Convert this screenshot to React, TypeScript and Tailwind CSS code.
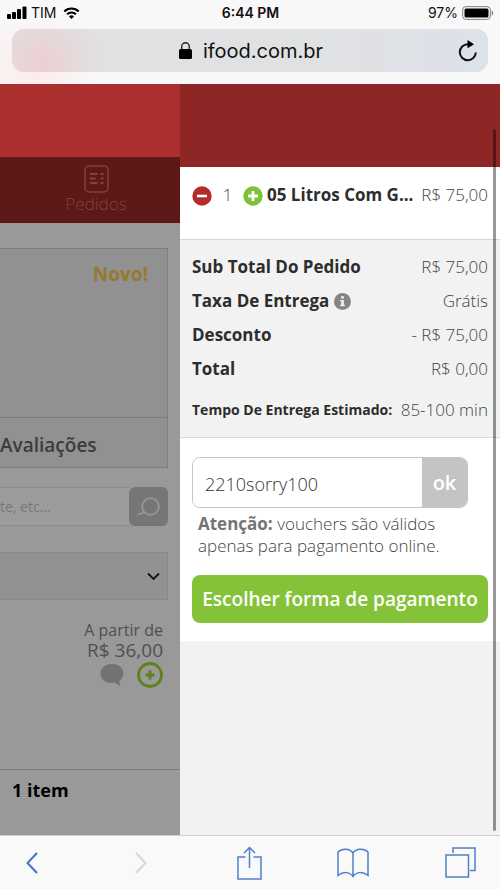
import { useState } from "react";

interface SummaryRowProps {
  label: string;
  value: string;
  info?: boolean;
}

const summary: SummaryRowProps[] = [
  { label: "Sub Total Do Pedido", value: "R$ 75,00" },
  { label: "Taxa De Entrega", value: "Grátis", info: true },
  { label: "Desconto", value: "- R$ 75,00" },
  { label: "Total", value: "R$ 0,00" },
];

function StatusBar() {
  return (
    <div className="grid h-[25px] grid-cols-3 items-center pl-[7px] pr-[6px] font-['Inter',sans-serif] text-sm text-[#111]">
      <div className="flex items-center gap-1">
        <svg width="20" height="13" viewBox="0 0 20 13" fill="#000" aria-hidden="true">
          <rect x="0" y="8" width="4" height="5" rx="1" />
          <rect x="5" y="6" width="4" height="7" rx="1" />
          <rect x="10" y="3" width="4" height="10" rx="1" />
          <rect x="15.500" y="0.500" width="4" height="12.500" rx="1" />
        </svg>
        <span>TIM</span>
        <svg className="ml-[3px]" width="17" height="12" viewBox="0 0 18 13" fill="none" stroke="#000" strokeWidth="2.300" aria-hidden="true">
          <path d="M1.200 4.800a11 11 0 0 1 15.600 0" />
          <path d="M4.200 7.900a6.800 6.800 0 0 1 9.600 0" />
          <path d="M9 13 6.300 10.200a3.800 3.800 0 0 1 5.400 0z" fill="#000" stroke="none" />
        </svg>
      </div>
      <span className="text-center font-semibold">6:44 PM</span>
      <div className="flex items-center justify-end gap-1">
        <span>97%</span>
        <svg width="32" height="14" viewBox="0 0 32 14" aria-hidden="true">
          <rect x="0.700" y="0.700" width="27.600" height="12.600" rx="3" fill="#fff" stroke="#777" />
          <rect x="2.500" y="2.500" width="24" height="9" rx="1.500" fill="#000" />
          <path d="M29.700 4.500c2 .6 2 4.400 0 5z" fill="#888" />
        </svg>
      </div>
    </div>
  );
}

function AddressBar() {
  return (
    <div className="bg-[radial-gradient(circle_at_35px_40px,#fceaea_0,transparent_60px)] px-3 pb-3 pt-1">
      <div className="flex h-[43px] items-center rounded-xl bg-[#e1e2e4] bg-[radial-gradient(circle_at_30px_35px,#eccfd2_0,transparent_60px),linear-gradient(90deg,#e0e1e2_60%,#dde1e9)] pl-8 pr-[10px]">
        <div className="flex flex-1 items-center justify-center gap-[11px]">
          <svg width="13" height="17" viewBox="0 0 13 17" aria-hidden="true">
            <rect x="0" y="7" width="13" height="10" rx="1.500" fill="#000" />
            <path d="M2.700 8V4.600a3.800 3.800 0 0 1 7.600 0V8" fill="none" stroke="#222" strokeWidth="1.400" />
          </svg>
          <span className="font-['Inter',sans-serif] text-xl text-[#111]">ifood.com.br</span>
        </div>
        <button type="button" aria-label="Recarregar">
          <svg width="20" height="22" viewBox="0 0 20 22" fill="none" aria-hidden="true">
            <path d="M11 4.200H9.800a8 8 0 1 0 8 8.300" stroke="#111" strokeWidth="2" />
            <path d="M9.500 0v8.200L16 4.300z" fill="#000" />
          </svg>
        </button>
      </div>
    </div>
  );
}

/* Restaurant page, dimmed while the cart is open */
function RestaurantPage() {
  return (
    <main className="flex w-9/25 min-w-[180px] flex-col overflow-hidden bg-[#999]">
      <header className="h-[73px] bg-[#ab2f2e]" />
      <nav className="flex h-[66px] flex-col bg-[#5d1818] pl-3 pt-2">
        <a href="#pedidos" className="flex flex-col items-center text-[#8a3e3e]">
          <svg width="25" height="28" viewBox="0 0 25 28" fill="none" stroke="currentColor" aria-hidden="true">
            <rect x="1" y="1" width="23" height="26" rx="4" strokeWidth="1.500" />
            <path d="M6 9h7.500M6 13.500h5.500M6 18h7.500" strokeWidth="2" />
            <path d="M16.500 9h3M16.500 13.500h3M16.500 18h3" strokeWidth="2.200" />
          </svg>
          <span className="text-[17px] font-light leading-[22px]">Pedidos</span>
        </a>
      </nav>

      <div className="flex flex-col pr-3 pt-[25px]">
        <section className="border border-l-0 border-[#7e7e7e] bg-[#919191]">
          <div className="h-[168px] pr-[19px] pt-[13px] text-right text-[19px] font-bold leading-6 text-[#957a2c]">Novo!</div>
          <h2 className="h-[50px] border-t border-[#7e7e7e] text-[19px] font-semibold leading-[54px] text-[#3c3c3c]">Avaliações</h2>
        </section>

        <form className="mt-[19px] flex h-[39px]" onSubmit={(e) => e.preventDefault()}>
          <input
            type="search"
            aria-label="Buscar no cardápio"
            placeholder="te, etc..."
            className="min-w-0 flex-1 border-y border-[#8a8a8a] bg-[#9c9c9c] text-sm outline-none placeholder:text-[#777]"
          />
          <button type="submit" aria-label="Buscar" className="flex w-[39px] items-center justify-center rounded-md bg-[#767676]">
            <svg width="23" height="20" viewBox="0 0 23 20" fill="none" stroke="#979797" strokeWidth="1.800" aria-hidden="true">
              <circle cx="13.500" cy="9.500" r="8.300" />
              <path d="M7 14.500 5.500 16 1 17.500" />
            </svg>
          </button>
        </form>

        <div className="relative mt-[26px]">
          <select aria-label="Categoria" className="h-12 w-full appearance-none border border-l-0 border-[#898989] bg-[#919191]">
            <option value=""></option>
          </select>
          <svg className="pointer-events-none absolute right-2 top-5" width="13" height="9" viewBox="0 0 13 9" fill="none" stroke="#111" strokeWidth="1.800" aria-hidden="true">
            <path d="M1 1.500 6.500 7 12 1.500" />
          </svg>
        </div>

        <div className="mt-5 flex flex-col items-end pr-[5px] font-medium text-[#505050]">
          <span className="text-base leading-5">A partir de</span>
          <span className="text-[19px] leading-5">R$ 36,00</span>
          <div className="mt-[2px] flex items-center gap-[13px]">
            <button type="button" aria-label="Comentários">
              <svg width="24" height="22" viewBox="0 0 24 22" fill="#727272" aria-hidden="true">
                <path d="M12 0C5.400 0 .5 4 .5 9.500S5.400 19 12 19c1 0 2.200-.1 3.200-.4 1.300 1.600 3.300 2.900 5.300 3.200-.8-1.500-1.100-3.300-.9-5.100 2.400-1.700 3.900-4.300 3.900-7.200C23.500 4 18.600 0 12 0z" />
              </svg>
            </button>
            <button type="button" aria-label="Adicionar item">
              <svg width="26" height="26" viewBox="0 0 26 26" fill="none" stroke="#5f801f" aria-hidden="true">
                <circle cx="13" cy="13" r="11.500" strokeWidth="2.800" />
                <path d="M13 8.500v9M8.500 13h9" strokeWidth="3" />
              </svg>
            </button>
          </div>
        </div>
      </div>

      <footer className="mt-auto h-[66px] border-t border-[#7c7c7c] pl-3 pt-2 text-lg font-bold leading-6 text-black">1 item</footer>
    </main>
  );
}

function SummaryRow({ label, value, info }: SummaryRowProps) {
  return (
    <div className="flex h-[34px] items-center justify-between">
      <dt className="flex items-center gap-[5px] font-bold text-[#2d2d2d]">
        {label}
        {info && (
          <svg width="17" height="17" viewBox="0 0 17 17" aria-hidden="true">
            <circle cx="8.500" cy="8.500" r="8.500" fill="#858585" />
            <path d="M7 3.200h3v2.300H7zM6.200 7h3.700v4.800h1v1.400H6.100v-1.400h1.100V8.400h-1z" fill="#eee" />
          </svg>
        )}
      </dt>
      <dd className="font-light text-[#444]">{value}</dd>
    </div>
  );
}

function CartPanel() {
  const [quantity, setQuantity] = useState(1);
  const [voucher, setVoucher] = useState("2210sorry100");

  return (
    <aside className="relative flex min-w-0 flex-1 flex-col bg-[#f2f2f2] text-[17px]">
      <header className="h-[83px] bg-[#8d2625]" />

      <div className="flex h-[73px] items-start border-b border-[#d8d8d8] bg-white px-3 pt-4 leading-6">
        <button type="button" aria-label="Remover um" className="mt-[3px]" onClick={() => setQuantity(Math.max(0, quantity - 1))}>
          <svg width="20" height="20" viewBox="0 0 20 20" aria-hidden="true">
            <circle cx="10" cy="10" r="9.700" fill="#b32b2c" />
            <path d="M5 10h10" stroke="#fff" strokeWidth="2.600" />
          </svg>
        </button>
        <span className="flex-none basis-[31px] text-center font-light text-[#444]">{quantity}</span>
        <button type="button" aria-label="Adicionar um" className="mt-[3px]" onClick={() => setQuantity(quantity + 1)}>
          <svg width="20" height="20" viewBox="0 0 20 20" aria-hidden="true">
            <circle cx="10" cy="10" r="9.700" fill="#7dc232" />
            <path d="M10 5v10M5 10h10" stroke="#fff" strokeWidth="2.800" />
          </svg>
        </button>
        <span className="ml-1 min-w-0 flex-1 whitespace-nowrap font-bold text-[#2d2d2d]">05 Litros Com G...</span>
        <span className="whitespace-nowrap font-light text-[#444]">R$ 75,00</span>
      </div>

      <dl className="border-b border-[#d8d8d8] px-3 pb-2 pt-[10px]">
        {summary.map((row) => (
          <SummaryRow key={row.label} {...row} />
        ))}
        <div className="mt-1 flex h-[39px] items-center justify-between whitespace-nowrap">
          <dt className="text-sm font-bold text-[#2d2d2d]">Tempo De Entrega Estimado:</dt>
          <dd className="font-light text-[#444]">85-100 min</dd>
        </div>
      </dl>

      <div className="bg-white px-3 pb-[18px] pt-[19px]">
        <form className="mr-5 flex h-[51px] overflow-hidden rounded-lg border border-[#c4c4c4]" onSubmit={(e) => e.preventDefault()}>
          <input
            type="text"
            aria-label="Voucher"
            value={voucher}
            onChange={(e) => setVoucher(e.target.value)}
            className="min-w-0 flex-1 bg-white pl-3 pt-[2px] text-lg font-light text-[#333] outline-none"
          />
          <button type="submit" className="w-[45px] bg-[#c4c4c4] text-xl font-semibold text-white">ok</button>
        </form>
        <p className="mt-[5px] px-[6px] text-[17px] font-light leading-[22px] text-[#444]">
          <strong className="font-bold text-[#757575]">Atenção:</strong> vouchers são válidos apenas para pagamento online.
        </p>
        <button type="button" className="mt-[18px] h-12 w-full whitespace-nowrap rounded-lg bg-[#84c338] text-[19px] font-semibold text-white">
          Escolher forma de pagamento
        </button>
      </div>

      {/* Scroll indicator */}
      <div className="absolute bottom-1 right-1 top-[45px] w-[3px] rounded-full bg-black/40" />
    </aside>
  );
}

function BrowserToolbar() {
  return (
    <nav className="flex h-[54px] items-center justify-between border-t border-[#cfcfcf] bg-[#f9f9fa] pl-4 pr-6 text-[#4f7fc9]">
      <button type="button" aria-label="Voltar" className="flex w-8 justify-center">
        <svg width="12" height="22" viewBox="0 0 12 22" fill="none" stroke="#4772c4" strokeWidth="2">
          <path d="M11 1 1.500 11 11 21" />
        </svg>
      </button>
      <button type="button" aria-label="Avançar" disabled className="flex w-8 justify-end pr-2">
        <svg width="12" height="22" viewBox="0 0 12 22" fill="none" stroke="#d8d8d9" strokeWidth="2">
          <path d="m1 1 9.500 10L1 21" />
        </svg>
      </button>
      <button type="button" aria-label="Compartilhar" className="flex w-8 justify-end">
        <svg width="25" height="34" viewBox="0 0 25 34" fill="none" stroke="currentColor" strokeWidth="1.500">
          <path d="M8.500 11H1v22h23V11h-7.500M12.500 22V1.500M7 7l5.500-5.500L18 7" />
        </svg>
      </button>
      <button type="button" aria-label="Favoritos" className="flex w-8 justify-center">
        <svg width="32" height="30" viewBox="0 0 32 30" fill="none" stroke="currentColor" strokeWidth="1.500">
          <path d="M16 5C13 .2 5 0 1 4v23.500c5-4 11.500-4 15 1 3.500-5 10-5 15-1V4C27 0 19 .2 16 5zM16 5v23.500" />
        </svg>
      </button>
      <button type="button" aria-label="Abas" className="flex w-8 justify-end">
        <svg width="31" height="31" viewBox="0 0 31 31" fill="none" stroke="currentColor" strokeWidth="1.500">
          <path d="M1 8h22.500v22H1zM8 6V1h22v22.500h-5" />
        </svg>
      </button>
    </nav>
  );
}

export default function App() {
  return (
    <div className="flex min-h-screen flex-col bg-[#f8f8f9] font-['Open_Sans',sans-serif]">
      <StatusBar />
      <AddressBar />
      <div className="flex flex-1">
        <RestaurantPage />
        <CartPanel />
      </div>
      <BrowserToolbar />
    </div>
  );
}
